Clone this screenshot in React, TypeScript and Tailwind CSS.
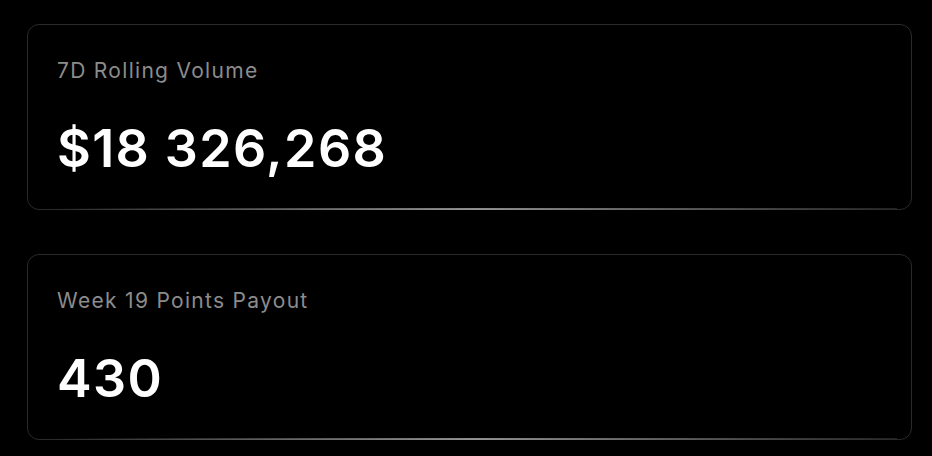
import React from 'react';

interface StatCardProps {
  label: string;
  value: string;
}

const StatCard: React.FC<StatCardProps> = ({ label, value }) => {
  return (
    <div className="relative h-[186px] rounded-[12px] border border-[#2a2a2a] bg-black px-[29px] pt-[32px]">
      <p className="text-[21px] leading-[28px] tracking-[1.3px] text-[#8c8c8c]">{label}</p>
      <p className="mt-[34px] text-[52px] font-semibold leading-[60px] tracking-[1.4px] text-white">{value}</p>
      {/* bottom glow */}
      <div className="absolute -bottom-px left-[24px] right-[14px] h-[2px] bg-gradient-to-r from-transparent via-[#b0b0b0] to-[#2a2a2a] opacity-80" />
    </div>
  );
};

const App: React.FC = () => {
  return (
    <div
      className="flex h-[456px] w-[932px] flex-col gap-[44px] bg-black pl-[27px] pr-[20px] pt-[24px]"
      style={{ fontFamily: 'Inter, "Noto Sans", sans-serif' }}
    >
      <StatCard label="7D Rolling Volume" value="$18 326,268" />
      <StatCard label="Week 19 Points Payout" value="430" />
    </div>
  );
};

export default App;
